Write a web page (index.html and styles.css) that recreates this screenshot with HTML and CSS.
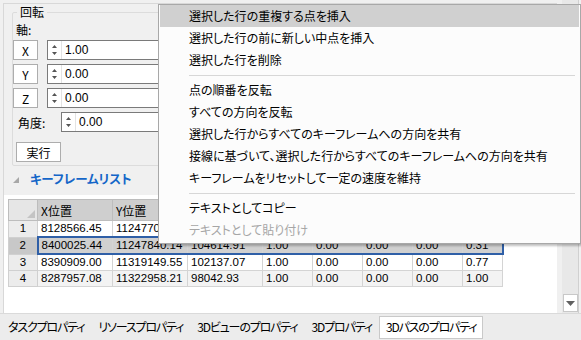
FILE: index.html
```html
<!DOCTYPE html>
<html lang="ja">
<head>
  <meta charset="UTF-8" />
  <title>3Dパスのプロパティ</title>
  <link rel="stylesheet" href="styles.css">
</head>
<body>
  <div class="window">
    <div class="content">
      <div class="panel">
        <!-- 回転 group -->
        <fieldset class="group">
          <legend>回転</legend>
          <div class="axis-title">軸:</div>

          <div class="axis-row">
            <button class="axis-btn">X</button>
            <div class="spin">
              <span class="spin-arrows"><svg width="7" height="14" viewBox="0 0 7 14"><path d="M1 5 L3.5 2 L6 5 Z M1 9 L3.5 12 L6 9 Z" fill="#555"/></svg></span>
              <span class="spin-value">1.00</span>
            </div>
          </div>
          <div class="axis-row">
            <button class="axis-btn">Y</button>
            <div class="spin">
              <span class="spin-arrows"><svg width="7" height="14" viewBox="0 0 7 14"><path d="M1 5 L3.5 2 L6 5 Z M1 9 L3.5 12 L6 9 Z" fill="#555"/></svg></span>
              <span class="spin-value">0.00</span>
            </div>
          </div>
          <div class="axis-row">
            <button class="axis-btn">Z</button>
            <div class="spin">
              <span class="spin-arrows"><svg width="7" height="14" viewBox="0 0 7 14"><path d="M1 5 L3.5 2 L6 5 Z M1 9 L3.5 12 L6 9 Z" fill="#555"/></svg></span>
              <span class="spin-value">0.00</span>
            </div>
          </div>

          <div class="angle-row">
            <span class="angle-label">角度:</span>
            <div class="spin">
              <span class="spin-arrows"><svg width="7" height="14" viewBox="0 0 7 14"><path d="M1 5 L3.5 2 L6 5 Z M1 9 L3.5 12 L6 9 Z" fill="#555"/></svg></span>
              <span class="spin-value">0.00</span>
            </div>
          </div>

          <button class="run-btn">実行</button>
        </fieldset>

        <!-- Keyframe list -->
        <div class="kf-head">
          <svg class="kf-toggle" width="6" height="6" viewBox="0 0 6 6"><path d="M6 0 L6 6 L0 6 Z" fill="#a8a8a8"/></svg>
          <span>キーフレームリスト</span>
        </div>

        <div class="grid-area">
          <table class="grid">
            <thead>
              <tr>
                <th class="corner"><svg width="8" height="8" viewBox="0 0 8 8"><path d="M8 0 L8 8 L0 8 Z" fill="#c4c4c4"/></svg></th>
                <th>X位置</th>
                <th>Y位置</th>
                <th>Z位置</th>
                <th>速度</th>
                <th>X方向</th>
                <th>Y方向</th>
                <th>Z方向</th>
                <th>時間</th>
              </tr>
            </thead>
            <tbody>
              <tr>
                <td class="rh">1</td>
                <td>8128566.45</td><td>11247701.82</td><td>107216.54</td><td>1.00</td><td>0.00</td><td>0.00</td><td>0.00</td><td>0.00</td>
              </tr>
              <tr class="sel">
                <td class="rh">2</td>
                <td class="first">8400025.44</td><td>11247840.14</td><td>104614.91</td><td>1.00</td><td>0.00</td><td>0.00</td><td>0.00</td><td class="last">0.31</td>
              </tr>
              <tr>
                <td class="rh">3</td>
                <td>8390909.00</td><td>11319149.55</td><td>102137.07</td><td>1.00</td><td>0.00</td><td>0.00</td><td>0.00</td><td>0.77</td>
              </tr>
              <tr class="alt">
                <td class="rh">4</td>
                <td>8287957.08</td><td>11322958.21</td><td>98042.93</td><td>1.00</td><td>0.00</td><td>0.00</td><td>0.00</td><td>1.00</td>
              </tr>
            </tbody>
          </table>
        </div>
      </div>

      <div class="vscroll">
        <div class="vscroll-track"></div>
        <div class="vscroll-btn"><svg width="9" height="5" viewBox="0 0 9 5"><path d="M0 0 L9 0 L4.5 5 Z" fill="#606060"/></svg></div>
      </div>
    </div>

    <div class="tabs">
      <div class="tab">タスクプロパティ</div>
      <div class="tab">リソースプロパティ</div>
      <div class="tab">3Dビューのプロパティ</div>
      <div class="tab">3Dプロパティ</div>
      <div class="tab active">3Dパスのプロパティ</div>
    </div>

    <!-- Context menu -->
    <div class="menu">
      <div class="menu-item hover">選択した行の重複する点を挿入</div>
      <div class="menu-item">選択した行の前に新しい中点を挿入</div>
      <div class="menu-item">選択した行を削除</div>
      <div class="menu-sep"></div>
      <div class="menu-item">点の順番を反転</div>
      <div class="menu-item">すべての方向を反転</div>
      <div class="menu-item">選択した行からすべてのキーフレームへの方向を共有</div>
      <div class="menu-item">接線に基づいて、選択した行からすべてのキーフレームへの方向を共有</div>
      <div class="menu-item">キーフレームをリセットして一定の速度を維持</div>
      <div class="menu-sep"></div>
      <div class="menu-item">テキストとしてコピー</div>
      <div class="menu-item disabled">テキストとして貼り付け</div>
    </div>
  </div>
</body>
</html>
```

FILE: styles.css
```css
body {
  margin: 0;
  font-family: "Noto Sans CJK JP", "Noto Sans", sans-serif;
  font-size: 12px;
  font-feature-settings: "palt";
  color: #000;
  background-color: #f0f0f0;
}

.window {
  position: relative;
  width: 581px;
  height: 340px;
  overflow: hidden;
  display: flex;
  flex-direction: column;
}

.content {
  display: flex;
  height: 313px;
}

/* left scrolling panel */
.panel {
  flex-grow: 1;
  margin: 3px 0 0 3px;
  border-left: 1px solid #d8d8d8;
  border-top: 1px solid #d8d8d8;
  display: flex;
  flex-direction: column;
  overflow: hidden;
}

.group {
  margin: 0 6px 0 8px;
  padding: 0 0 3px 0;
  border: 1px solid #dcdcdc;
  border-radius: 2px;
}

.group legend {
  margin-left: 4px;
  padding: 0 3px;
  line-height: 16px;
}

.axis-title {
  margin: 2px 0 0 3px;
  line-height: 16px;
}

.axis-row {
  display: flex;
  margin-top: 2px;
}

.axis-row + .axis-row {
  margin-top: 4px;
}

.axis-btn,
.run-btn {
  font-family: inherit;
  font-size: 12px;
  background: #fff;
  border: 1px solid #adadad;
  padding: 0;
  color: #000;
}

.axis-btn {
  width: 25px;
  height: 20px;
  margin-right: 9px;
}

.spin {
  flex-grow: 1;
  display: flex;
  align-items: center;
  height: 20px;
  box-sizing: border-box;
  background: #fff;
  border: 1px solid #7a7a7a;
}

.spin-arrows {
  width: 13px;
  height: 18px;
  display: flex;
  align-items: center;
  justify-content: center;
  border-right: 1px solid #e3e3e3;
}

.spin-value {
  margin-left: 3px;
  font-family: "Liberation Sans", sans-serif;
  font-size: 12px;
}

.angle-row {
  display: flex;
  align-items: center;
  margin-top: 4px;
}

.angle-label {
  width: 43px;
  margin-left: 5px;
}

.run-btn {
  width: 45px;
  height: 20px;
  margin: 10px 0 0 3px;
}

.kf-head {
  display: flex;
  align-items: center;
  height: 22px;
  margin-top: 1px;
  padding-left: 9px;
}

.kf-head span {
  margin-left: 11px;
  color: #1466c8;
  font-weight: bold;
  font-size: 12.5px;
}

.kf-toggle {
  margin-top: 3px;
}

.grid-area {
  flex-grow: 1;
  background: #fff;
  margin-top: 6px;
  padding: 4px 0 0 4px;
}

.grid {
  border-collapse: collapse;
  font-size: 12px;
  table-layout: fixed;
}

.grid th,
.grid td {
  border: 1px solid #d4d4d4;
  padding: 0 0 0 3px;
  text-align: left;
  font-weight: normal;
  white-space: nowrap;
  overflow: hidden;
}

.grid td {
  height: 15px;
  line-height: 15px;
  font-family: "Liberation Sans", sans-serif;
  font-size: 11.5px;
}

.grid th {
  height: 18px;
  background: #cfcfcf;
  border-color: #bdbdbd;
}

.grid th:nth-child(1) { width: 26px; }
.grid th:nth-child(2),
.grid th:nth-child(3),
.grid th:nth-child(4) { width: 71px; }
.grid th:nth-child(5),
.grid th:nth-child(6),
.grid th:nth-child(7),
.grid th:nth-child(8) { width: 46px; }
.grid th:nth-child(9) { width: 36px; }

.grid th.corner {
  background: #e6e6e6;
  text-align: right;
  vertical-align: bottom;
  padding: 0 2px 2px 0;
}

.grid th.corner svg {
  display: block;
  margin-left: auto;
}

.grid td.rh {
  background: #ececec;
  text-align: center;
  padding: 0;
  border-color: #d0d0d0;
}

.grid tr.alt td {
  background: #f3f3f3;
}

.grid tr.alt td.rh {
  background: #ececec;
}

.grid tr.sel td {
  background: #d0d0d0;
  height: 14px;
  border-top: 2px solid #2f5fa7;
  border-bottom: 2px solid #2f5fa7;
}

.grid tr.sel td.rh {
  background: #c8c8c8;
  border-top: 1px solid #d0d0d0;
  border-bottom: 1px solid #d0d0d0;
}

.grid tr.sel td.first { border-left: 2px solid #2f5fa7; }
.grid tr.sel td.last { border-right: 2px solid #2f5fa7; }

/* vertical scrollbar */
.vscroll {
  width: 17px;
  margin-left: 5px;
  margin-right: 2px;
  display: flex;
  flex-direction: column;
  background: #e8e8e8;
  border-right: 1px solid #d0d0d0;
  box-sizing: border-box;
}

.vscroll-track {
  flex-grow: 1;
}

.vscroll-btn {
  height: 16px;
  margin: 0 0 1px 1px;
  background: #fff;
  border: 1px solid #c8c8c8;
  display: flex;
  align-items: center;
  justify-content: center;
}

/* bottom tabs */
.tabs {
  flex-grow: 1;
  display: flex;
  align-items: flex-start;
  padding: 2px 0 0 1px;
  background: #ececec;
  border-top: 1px solid #dadada;
}

.tab {
  padding: 0 6px;
  height: 20px;
  line-height: 20px;
  border: 1px solid transparent;
  font-size: 12px;
  letter-spacing: -1.15px;
}

.tab.active {
  background: #fff;
  border-color: #c9c9c9;
  height: 21px;
}

/* context menu */
.menu {
  position: absolute;
  left: 158px;
  top: 4px;
  width: 419px;
  padding: 0 1px 2px 1px;
  background: #fcfcfc;
  border: 1px solid #a8a8a8;
  box-shadow: 2px 2px 2px rgba(0, 0, 0, 0.25);
}

.menu-item {
  height: 22px;
  line-height: 22px;
  padding-left: 29px;
  white-space: nowrap;
}

.menu-item.hover {
  background: #d0d0d0;
}

.menu-item.disabled {
  color: #a6a6a6;
}

.menu-sep {
  height: 1px;
  margin: 4px 4px 3px 29px;
  background: #d7d7d7;
}
```
